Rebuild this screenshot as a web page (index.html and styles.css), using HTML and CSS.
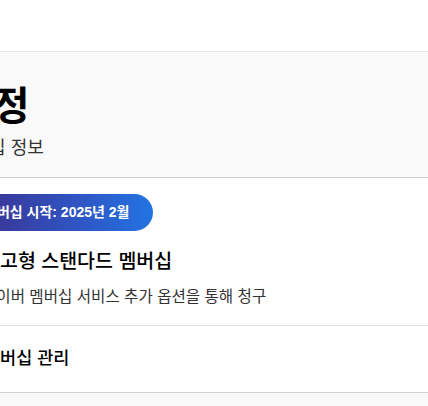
FILE: index.html
```html
<!DOCTYPE html>
<html lang="ko">
<head>
<meta charset="utf-8">
<title>계정</title>
<link rel="stylesheet" href="styles.css">
</head>
<body>
<div class="topbar"></div>
<main class="shell">
  <header class="account-head">
    <h1 class="title">계정</h1>
    <p class="subtitle">멤버십 정보</p>
  </header>
  <section class="plan">
    <div class="badge">멤버십 시작: 2025년 2월</div>
    <div class="plan-body">
      <h2 class="plan-name">광고형 스탠다드 멤버십</h2>
      <p class="plan-note">네이버 멤버십 서비스 추가 옵션을 통해 청구</p>
    </div>
    <a class="manage" href="#">멤버십 관리</a>
  </section>
  <div class="below"></div>
</main>
</body>
</html>
```
FILE: styles.css
```css
html, body {
  margin: 0;
  padding: 0;
  background: #fff;
}
body {
  font-family: "Liberation Sans", "Noto Sans CJK KR", sans-serif;
  color: #000;
  overflow: hidden;
  width: 428px;
  height: 406px;
}
.topbar {
  height: 51px;
  border-bottom: 1px solid #e6e6e6;
}
.shell {
  margin-left: -60px;
  width: 560px;
}
.account-head {
  box-sizing: border-box;
  background: #f9f9f9;
  height: 126px;
  border-bottom: 1px solid #d0d0d0;
  padding: 30px 0 0 16px;
}
.title {
  margin: 0;
  font-size: 40px;
  line-height: 48px;
  font-weight: 700;
}
.subtitle {
  margin: 6px 0 0;
  font-size: 18px;
  line-height: 24px;
  color: #333;
}
.plan {
  padding-top: 16px;
}
.badge {
  display: inline-block;
  height: 37px;
  line-height: 37px;
  padding: 0 24px 0 44px;
  border-radius: 0 19px 19px 0;
  background: linear-gradient(90deg, #3c2f94 0%, #383c9e 30%, #2f55c4 65%, #2274e2 100%);
  color: #fff;
  font-size: 14px;
  font-weight: 700;
}
.plan-body {
  padding: 17px 0 17px 42px;
  border-bottom: 1px solid #e3e3e3;
}
.plan-name {
  margin: 0;
  font-size: 19.5px;
  line-height: 26px;
  font-weight: 500;
}
.plan-note {
  margin: 12px 0 0;
  font-size: 15.6px;
  line-height: 22px;
  color: #333;
}
.manage {
  display: block;
  height: 66px;
  line-height: 65px;
  padding-left: 44px;
  font-size: 17.5px;
  font-weight: 500;
  color: #000;
  text-decoration: none;
  border-bottom: 1px solid #cfcfcf;
}
.below {
  background: #f9f9f9;
  height: 40px;
}
```
